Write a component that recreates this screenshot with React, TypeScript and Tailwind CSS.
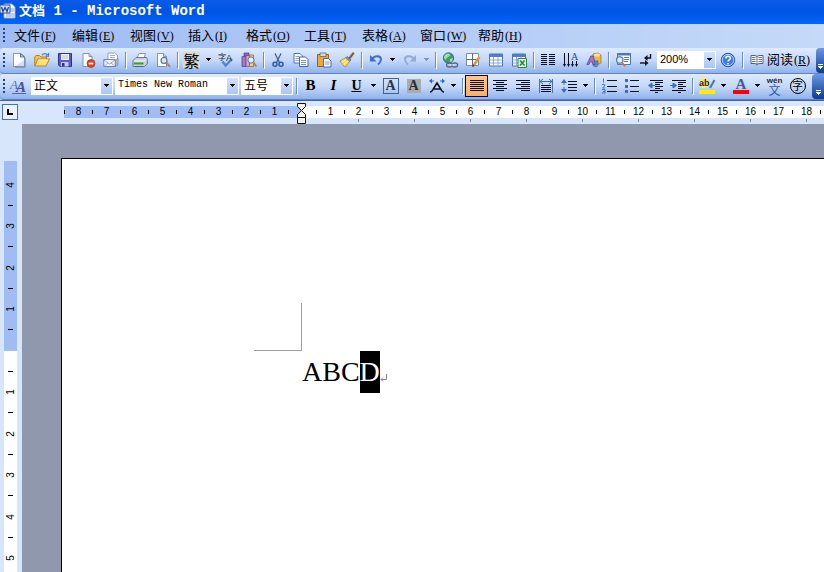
import type { ReactNode } from "react";
import clsx from "clsx";

const MENUS = [
  ["文件", "F"],
  ["编辑", "E"],
  ["视图", "V"],
  ["插入", "I"],
  ["格式", "O"],
  ["工具", "T"],
  ["表格", "A"],
  ["窗口", "W"],
  ["帮助", "H"],
];

const Icon = ({ children }: { children: ReactNode }) => (
  <svg viewBox="0 0 16 16" className="size-4 shrink-0 overflow-visible" fill="none" aria-hidden="true">
    {children}
  </svg>
);

/* horizontal text-line strokes shared by the paragraph icons */
const Lines = ({ d }: { d: string }) => (
  <path d={d} stroke="#0b1020" strokeWidth="1" shapeRendering="crispEdges" />
);

const NewDoc = () => (
  <Icon>
    <path d="M4 2h6.500l4 4v9.500H4z" fill="#6f7b93" />
    <path d="M2.500 1.500h7l4 3.500v9.500h-11z" fill="#fff" stroke="#7485a6" strokeWidth=".8" />
    <path d="M9.500 1.500V5h4z" fill="#b7c8e2" stroke="#465a80" strokeWidth=".8" />
    <path d="M4 14h9V8z" fill="#d4def0" />
  </Icon>
);

const OpenFolder = () => (
  <Icon>
    <path d="M.8 14V5L2 3.500h3.500L6.800 5h5.700v3" fill="#f3c64f" stroke="#a9761a" strokeWidth=".9" />
    <path d="M.8 14l3-7h11.700L12 14z" fill="#ffdf73" stroke="#b07e1c" strokeWidth=".9" />
    <path d="M4.500 8H14" stroke="#fff4b8" />
    <path d="M8 3.200c1.500-2 4-2 5.500 0M14.500 1v3.200h-3" stroke="#4b79c6" strokeWidth="1.200" />
  </Icon>
);

const Save = () => (
  <Icon>
    <path d="M1.500 1.500h13v13H3L1.500 13z" fill="#5a5fc8" stroke="#30318b" />
    <path d="M4 2h8v6H4z" fill="#eef2fc" />
    <path d="M5 4h6M5 6h6" stroke="#a9b2d8" strokeWidth=".8" />
    <path d="M4 10h7.500v4.500H4z" fill="#c8cbea" />
    <path d="M5 11h2.500v3.500H5z" fill="#2f3180" />
  </Icon>
);

const Permission = () => (
  <Icon>
    <path d="M3 1.500h6l3 3v10H3z" fill="#fff" stroke="#6d7f9f" strokeWidth=".8" />
    <path d="M9 1.500v3h3" fill="#bdcce6" stroke="#6d7f9f" strokeWidth=".8" />
    <circle cx="11" cy="11.500" r="4" fill="#e2431f" stroke="#a32a10" strokeWidth=".6" />
    <path d="M8.700 11.500h4.600" stroke="#fff" strokeWidth="1.700" />
  </Icon>
);

const Mail = () => (
  <Icon>
    <path d="M5 1h6.500l3 2.500V9H5z" fill="#fff" stroke="#7c88a6" strokeWidth=".8" />
    <path d="M7 3.500h5M7 5.500h5" stroke="#8d98b4" strokeWidth=".8" />
    <path d="M.8 7.500h11.500v7H.8z" fill="#f2f4fb" stroke="#69779a" strokeWidth=".9" />
    <path d="M1 8l5.500 4L12 8M1 14.500l4-3.700M12 14.500l-4-3.700" stroke="#8792ae" strokeWidth=".8" />
    <path d="M12.500 8L15 6.500V13l-2.500 1.500z" fill="#b3bbd0" stroke="#69779a" strokeWidth=".6" />
  </Icon>
);

const Print = () => (
  <Icon>
    <path d="M5 6l2-4.500h6.500L12 6z" fill="#fff" stroke="#6f7c99" strokeWidth=".8" />
    <path d="M1 8.500l3-3h10.500l.8 2V12l-3 2.500H1z" fill="#c9d1dc" stroke="#5d6b83" strokeWidth=".9" />
    <path d="M2 9h10l2.500-2" stroke="#f6f8fb" />
    <path d="M2 11.500h9.500" stroke="#2fa238" strokeWidth="2" />
    <path d="M3 14.500h8" stroke="#54617a" />
  </Icon>
);

const Preview = () => (
  <Icon>
    <path d="M2.500 1.500h6l3 3v10h-9z" fill="#fff" stroke="#6d7f9f" strokeWidth=".8" />
    <path d="M8.500 1.500v3h3" fill="#bdcce6" stroke="#6d7f9f" strokeWidth=".8" />
    <circle cx="9" cy="8.500" r="3" fill="#cde9f8" stroke="#5c6d8e" strokeWidth="1.100" />
    <path d="M11.300 10.800l3.700 4" stroke="#b98345" strokeWidth="2" />
  </Icon>
);

const Spelling = () => (
  <Icon>
    <path d="M4.500 9.500l3.200 4L14 7" stroke="#5581cc" strokeWidth="2.400" />
    <text x="0" y="8" fontSize="8" fill="#18223e" fontFamily="'Noto Sans CJK SC', sans-serif">
      字
    </text>
    <text x="8" y="9" fontSize="9" fill="#18223e" fontFamily="'Liberation Sans', sans-serif">
      A
    </text>
  </Icon>
);

const Research = () => (
  <Icon>
    <path d="M1 4.500h4v10H1z" fill="#9a7cc8" stroke="#523a86" strokeWidth=".7" />
    <path d="M3 1h5v3H3z" fill="#8b6dbd" stroke="#523a86" strokeWidth=".7" />
    <path d="M5 3.500h3.500v11H5z" fill="#d9a6cf" stroke="#71488c" strokeWidth=".7" />
    <path d="M8.500 3h4v11.500h-4z" fill="#f0d08a" stroke="#8a5f1c" strokeWidth=".7" />
    <circle cx="10" cy="8" r="3.100" fill="#dff1fb" stroke="#64728e" strokeWidth="1" />
    <path d="M12.200 10.300l3.300 4.200" stroke="#b98345" strokeWidth="2" />
  </Icon>
);

const Cut = () => (
  <Icon>
    <path d="M5 1.500l4.500 9M11 1.500l-4.500 9" stroke="#3b5c98" strokeWidth="1.300" />
    <circle cx="5" cy="12.300" r="2" stroke="#2e57a5" strokeWidth="1.500" />
    <circle cx="11" cy="12.300" r="2" stroke="#2e57a5" strokeWidth="1.500" />
  </Icon>
);

const Copy = () => (
  <Icon>
    <path d="M1 1.500h6L9.500 4v7H1z" fill="#fff" stroke="#4f72b5" />
    <path d="M2.500 4.500h4M2.500 6.500h4M2.500 8.500h3" stroke="#7e9fd6" />
    <path d="M6.500 5h6L15 7.500v7H6.500z" fill="#fff" stroke="#4064ab" />
    <path d="M8 8.500h5M8 10.500h5M8 12.500h5" stroke="#6d92d1" />
  </Icon>
);

const Paste = () => (
  <Icon>
    <path d="M1.500 2.500h11v12h-11z" fill="#e8aa3c" stroke="#94621a" />
    <path d="M4 1h6v3.500H4z" fill="#d6d8de" stroke="#606777" strokeWidth=".8" />
    <path d="M7.500 6.500h5L15 9v6H7.500z" fill="#fff" stroke="#4c68a4" />
    <path d="M9 10h4.500M9 12h4.500" stroke="#7898cf" />
  </Icon>
);

const Brush = () => (
  <Icon>
    <path d="M14.800.8L10 6.800" stroke="#8a5f33" strokeWidth="2.200" />
    <path d="M8 4.500L12 8l-1.500 1.500-4-3.500z" fill="#7492ca" stroke="#415f98" strokeWidth=".7" />
    <path d="M6.500 5.800l4 3.800L6 15.300.8 9z" fill="#f7da63" stroke="#ab8328" strokeWidth=".8" />
    <path d="M3 10.500l4-3M4.500 12.500l4-3.500" stroke="#fff5b5" />
  </Icon>
);

const Undo = ({ className }: { className: string }) => (
  <svg viewBox="0 0 16 16" className={clsx("size-4 shrink-0", className)} fill="none" aria-hidden="true">
    <path d="M4 7c3-4 9-3.500 9 .5 0 2-1.300 3.500-3 5" stroke="currentColor" strokeWidth="2" />
    <path d="M2 3v6.500h6.500z" fill="currentColor" />
  </svg>
);

const Hyperlink = () => (
  <Icon>
    <circle cx="6.500" cy="6" r="5.200" fill="#3f9b76" stroke="#256a71" strokeWidth=".8" />
    <path d="M3 3c2-2 5-1.500 5 0S5 5 4 7 2 6 2 5zM8 7l3-1-1 3.500-2 .5z" fill="#a1dcae" />
    <ellipse cx="7.500" cy="13" rx="3" ry="2" stroke="#58698c" strokeWidth="1.300" />
    <ellipse cx="12.700" cy="13" rx="3" ry="2" stroke="#58698c" strokeWidth="1.300" />
    <path d="M8 13h4.500" stroke="#eef3fb" />
  </Icon>
);

const Borders = () => (
  <Icon>
    <path d="M1.500 1.500h12v12h-12z" fill="#fff" stroke="#7e8ba8" />
    <path d="M7.500 1.500v12M1.500 7.500h12" stroke="#5a6785" />
    <path d="M14.500 5l-6 8.500" stroke="#d89a3a" strokeWidth="2.600" />
    <path d="M7.200 15.200l.5-3 2.200 1.600z" fill="#3b332a" />
  </Icon>
);

const Grid = () => (
  <>
    <path d="M1.500 2h13v12h-13z" fill="#fff" stroke="#4872bd" />
    <path d="M1.500 2h13v3h-13z" fill="#4f7dcc" />
    <path d="M1.500 8h13M1.500 11h13M5.500 5v9M10 5v9" stroke="#8aa8db" />
  </>
);

const Excel = () => (
  <Icon>
    <Grid />
    <path d="M7 6.500h8.500v9H7z" fill="#e7f5e3" stroke="#2f8740" />
    <path d="M9 8.500l4.500 5M13.500 8.500l-4.500 5" stroke="#27883a" strokeWidth="1.700" />
  </Icon>
);

const TextDirection = () => (
  <Icon>
    <Lines d="M1.500 1v12M5.500 1v12M9.500 9v4M13.500 9v4" />
    <path d="M0 12h3l-1.500 3zM4 12h3l-1.500 3zM8 12h3l-1.500 3zM12 12h3l-1.500 3z" fill="#0b1020" />
    <text x="8" y="8" fontSize="10" fill="#24509f" fontFamily="'Liberation Serif', serif">
      A
    </text>
  </Icon>
);

const Drawing = () => (
  <Icon>
    <path d="M7 2l5-1 3 2v8l-4 2-4-2z" fill="#eab653" stroke="#9a6d1e" strokeWidth=".7" />
    <ellipse cx="11" cy="3" rx="3" ry="1.500" fill="#ffe39b" />
    <path d="M7 9h5v4.500L10 15l-3-1.500z" fill="#6492d8" stroke="#31589d" strokeWidth=".7" />
    <path d="M.8 12.500l4-8.500h2.500l2 8.500H7L6.500 10H4l-1 2.500z" fill="#9678cc" stroke="#533a8e" strokeWidth=".7" />
  </Icon>
);

const DocMap = () => (
  <Icon>
    <path d="M2.500 1.500h13v11h-13z" fill="#fff" stroke="#4c76bc" />
    <path d="M2.500 2.500h13" stroke="#4c76bc" strokeWidth="2" />
    <path d="M9 5.500h5M9 7.500h5M9 9.500h4" stroke="#6a7896" />
    <circle cx="4.800" cy="8" r="3.200" fill="#d5eef9" stroke="#51698f" strokeWidth="1.100" />
    <path d="M7 10.500l3 4" stroke="#c08437" strokeWidth="2" />
  </Icon>
);

const Marks = () => (
  <Icon>
    <path d="M12.500 2v4H8" stroke="#0b1020" strokeWidth="1.400" />
    <path d="M9.500 3v6L6 6zM7 8l3.500 3L7 14z" fill="#0b1020" />
    <path d="M2 11h6" stroke="#0b1020" strokeWidth="1.400" />
  </Icon>
);

const Help = () => (
  <Icon>
    <circle cx="8" cy="8" r="6.700" fill="#3c7be0" stroke="#2454a8" />
    <circle cx="8" cy="8" r="5.700" stroke="#d3e5ff" strokeWidth=".8" />
    <path d="M5.800 6.500c0-3 4.500-3 4.500-.3 0 1.600-2.200 1.600-2.200 3.300M8 11v1.500" stroke="#fff" strokeWidth="1.500" />
  </Icon>
);

const Book = () => (
  <Icon>
    <path d="M2 3.500h4l2 1 2-1h4v8h-4l-2 1-2-1H2z" fill="#fff" stroke="#50607f" />
    <path d="M8 4.500v9M3 5.500h3.500M3 7.500h3.500M3 9.500h3.500M9.500 5.500H13M9.500 7.500H13M9.500 9.500H13" stroke="#65728f" />
  </Icon>
);

const Styles = () => (
  <Icon>
    <text x="-1" y="11" fontSize="13" fontStyle="italic" fill="#4f74bd" fontFamily="'Liberation Serif', serif">
      A
    </text>
    <text x="5" y="14" fontSize="15" fontStyle="italic" fontWeight="700" fill="#4a4f9e" fontFamily="'Liberation Serif', serif">
      A
    </text>
    <path d="M1 15.500h14" stroke="#5b63b0" />
  </Icon>
);

const CharScale = () => (
  <Icon>
    <path d="M1 14c2 0 2-1 3-2.500L8 5l4 6.500c1 1.500 1 2.500 3 2.500M5 11h6" stroke="#0b1020" strokeWidth="1.500" />
    <path d="M3 .5v5L0 3zM13 .5v5L16 3z" fill="#2b65c4" />
    <path d="M2 3h3M11 3h3" stroke="#2b65c4" />
  </Icon>
);

const Distribute = () => (
  <Icon>
    <path d="M1.500 1v14M14.500 1v14" stroke="#4b6fae" />
    <path d="M2 3.500h12M5 1L2 3.500 5 6M11 1l3 2.500L11 6" stroke="#3a6cc0" />
    <Lines d="M3 7.500h10M3 9.500h10M3 11.500h10M3 13.500h10" />
  </Icon>
);

const LineSpacing = () => (
  <Icon>
    <path d="M3 3v10" stroke="#3a6cc0" strokeDasharray="4 2" />
    <path d="M0 5l3-4 3 4zM0 11l3 4 3-4z" fill="#3a6cc0" />
    <Lines d="M7 3.500h9M7 6.500h9M7 9.500h9M7 12.500h9" />
  </Icon>
);

const Numbered = () => (
  <Icon>
    <path d="M2.500.5v4M1 6.500h2.500V8L1.500 10H4M1 11.500h3V15H1M2 13.500h2" stroke="#3a6cc0" strokeWidth=".9" />
    <Lines d="M6 2.500h10M6 8.500h10M6 13.500h10" />
  </Icon>
);

const Bullets = () => (
  <Icon>
    <path d="M1 1h3v3H1zM1 7h3v3H1zM1 12h3v3H1z" fill="#3a6cc0" />
    <Lines d="M6 2.500h9M6 8.500h9M6 13.500h9" />
  </Icon>
);

const Outdent = () => (
  <Icon>
    <Lines d="M3 2.500h13M8 4.500h8M8 6.500h5M8 8.500h8M8 10.500h5M3 12.500h13M8 14.500h3" />
    <path d="M5 5v5L1.500 7.500zM4 7.500h4" fill="#3a6cc0" stroke="#3a6cc0" />
  </Icon>
);

const Indent = () => (
  <Icon>
    <Lines d="M2 2.500h14M8 4.500h8M8 6.500h5M8 8.500h8M8 10.500h5M2 12.500h14M8 14.500h3" />
    <path d="M3 5v5l3.500-2.500zM0 7.500h4" fill="#3a6cc0" stroke="#3a6cc0" />
  </Icon>
);

const Highlight = () => (
  <Icon>
    <circle cx="5" cy="5" r="5" fill="#fff04a" />
    <text x="0" y="8" fontSize="9" fontWeight="700" fill="#1b2440" fontFamily="'Liberation Sans', sans-serif">
      ab
    </text>
    <path d="M15.500 2L11 10" stroke="#50709f" strokeWidth="2" />
    <path d="M0 12h16v4H0z" fill="#ffee00" />
  </Icon>
);

const FontColor = () => (
  <Icon>
    <text x="2.500" y="11" fontSize="15" fontWeight="700" fill="#3a5c9c" fontFamily="'Liberation Serif', serif">
      A
    </text>
    <path d="M0 12h16v4H0z" fill="#f00" />
  </Icon>
);

const Phonetic = () => (
  <span className="flex flex-col items-center">
    <span className="font-['Liberation_Sans',sans-serif] text-[8px] leading-[7px] font-bold text-[#222a3c]">wén</span>
    <span className="font-['Noto_Sans_CJK_SC',sans-serif] text-[12px] leading-[11px] text-[#2f58b0]">文</span>
  </span>
);

const Enclosed = () => (
  <span className="grid size-4 place-items-center rounded-full border border-black text-[11px] leading-none">
    字
  </span>
);

interface ToolProps {
  label: string;
  active?: boolean;
  disabled?: boolean;
  children: ReactNode;
}

const Tool = ({ label, active, disabled, children }: ToolProps) => (
  <button
    type="button"
    aria-label={label}
    disabled={disabled}
    className={clsx(
      "flex h-[22px] w-[23px] shrink-0 items-center justify-center",
      active && "border border-[#000080] bg-linear-to-b from-[#ffc684] to-[#fdb05e]",
    )}
  >
    {children}
  </button>
);

const Arrow = () => (
  <svg viewBox="0 0 5 3" className="h-[3px] w-[5px]" fill="currentColor" shapeRendering="crispEdges" aria-hidden="true">
    <path d="M0 0h5L2.500 3z" />
  </svg>
);

const Caret = ({ label, disabled }: { label: string; disabled?: boolean }) => (
  <button
    type="button"
    aria-label={label}
    disabled={disabled}
    className="flex h-[22px] w-[11px] shrink-0 items-center justify-center disabled:text-[#7d93bd]"
  >
    <Arrow />
  </button>
);

const Separator = () => (
  <span className="flex w-[6px] shrink-0 justify-center">
    <i className="h-4 w-px bg-[#6a8ccb] shadow-[1px_1px_0_#fff]" />
  </span>
);

const Grip = () => (
  <span className="flex w-[7px] shrink-0 flex-col items-center gap-[2px]">
    {[0, 1, 2, 3].map((n) => (
      <i key={n} className="size-[2px] bg-[#27417f]" />
    ))}
  </span>
);

const Combo = ({ label, value, className }: { label: string; value: string; className: string }) => (
  <span className={clsx("relative h-[18px] shrink-0 bg-white", className)}>
    <select
      aria-label={label}
      className="block h-4 w-full appearance-none bg-transparent pl-[3px] leading-4 outline-none"
    >
      <option>{value}</option>
    </select>
    <span className="pointer-events-none absolute inset-y-px right-px flex w-[11px] items-center justify-center bg-linear-to-b from-[#d3e2fa] to-[#aac6f4]">
      <Arrow />
    </span>
  </span>
);

const Toolbar = ({ label, children }: { label: string; children: ReactNode }) => (
  <div
    role="toolbar"
    aria-label={label}
    className="flex h-[26px] items-center rounded-l-sm border-b border-[#5d84c6] bg-linear-to-b from-[#dfeafd] via-[#c4d8f8] to-[#8fb2ec] pb-[2px]"
  >
    {children}
  </div>
);

const Options = ({ className }: { className: string }) => (
  <button
    type="button"
    aria-label="工具栏选项"
    className={clsx(
      "-mb-[2px] ml-auto flex h-[25px] shrink-0 flex-col items-center justify-end gap-px rounded-l-sm bg-linear-to-b from-[#6c98e2] to-[#0c3a93] pb-1 text-white",
      className,
    )}
  >
    <i className="h-px w-[5px] bg-white" />
    <Arrow />
  </button>
);

const MenuKey = ({ letter }: { letter: string }) => (
  <span className="pl-px font-['Liberation_Serif',serif] text-[12px]">
    (<u>{letter}</u>)
  </span>
);

const StandardBar = () => (
  <Toolbar label="常用">
    <Grip />
    <Tool label="新建"><NewDoc /></Tool>
    <Tool label="打开"><OpenFolder /></Tool>
    <Tool label="保存"><Save /></Tool>
    <Tool label="权限"><Permission /></Tool>
    <Tool label="电子邮件"><Mail /></Tool>
    <Separator />
    <Tool label="打印"><Print /></Tool>
    <Tool label="打印预览"><Preview /></Tool>
    <Separator />
    <Tool label="繁体">
      <span className="bg-[#dcd9cf] text-[16px] leading-4">繁</span>
    </Tool>
    <Caret label="繁体选项" />
    <Tool label="拼写和语法"><Spelling /></Tool>
    <Tool label="信息检索"><Research /></Tool>
    <Separator />
    <Tool label="剪切"><Cut /></Tool>
    <Tool label="复制"><Copy /></Tool>
    <Tool label="粘贴"><Paste /></Tool>
    <Tool label="格式刷"><Brush /></Tool>
    <Separator />
    <Tool label="撤消"><Undo className="text-[#3d6fd0]" /></Tool>
    <Caret label="撤消选项" />
    <Tool label="恢复" disabled><Undo className="-scale-x-100 text-[#93abd6]" /></Tool>
    <Caret label="恢复选项" disabled />
    <Separator />
    <Tool label="超链接"><Hyperlink /></Tool>
    <Tool label="表格和边框"><Borders /></Tool>
    <Tool label="插入表格"><Icon><Grid /></Icon></Tool>
    <Tool label="插入 Excel 工作表"><Excel /></Tool>
    <Separator />
    <Tool label="分栏">
      <Icon>
        <Lines d="M1 2.500h6M9 2.500h6M1 4.500h6M9 4.500h6M1 6.500h6M9 6.500h6M1 8.500h6M9 8.500h6M1 10.500h6M9 10.500h6M1 12.500h6M9 12.500h6" />
      </Icon>
    </Tool>
    <Tool label="文字方向"><TextDirection /></Tool>
    <Tool label="绘图"><Drawing /></Tool>
    <Separator />
    <Tool label="文档结构图"><DocMap /></Tool>
    <Tool label="显示编辑标记"><Marks /></Tool>
    <Combo label="显示比例" value="200%" className="w-[59px] font-['Liberation_Sans',sans-serif] text-[11px]" />
    <Tool label="帮助"><Help /></Tool>
    <Separator />
    <button type="button" className="flex shrink-0 items-center gap-[2px] pl-1 text-[13px] leading-4 whitespace-nowrap">
      <Book />
      <span>
        阅读<MenuKey letter="R" />
      </span>
    </button>
    <Options className="w-2" />
  </Toolbar>
);

const FormattingBar = () => (
  <Toolbar label="格式">
    <Grip />
    <Tool label="格式窗格"><Styles /></Tool>
    <div className="flex shrink-0 gap-[2px] pl-px">
      <Combo label="样式" value="正文" className="w-[82px] text-[12px]" />
      <Combo label="字体" value="Times New Roman" className="w-[124px] font-['Liberation_Mono',monospace] text-[10px]" />
      <Combo label="字号" value="五号" className="w-[52px] text-[12px]" />
    </div>
    <Separator />
    <Tool label="加粗"><b className="font-['Liberation_Serif',serif] text-[15px]">B</b></Tool>
    <Tool label="倾斜"><b className="font-['Liberation_Serif',serif] text-[15px] italic">I</b></Tool>
    <Tool label="下划线"><b className="font-['Liberation_Serif',serif] text-[14px] underline">U</b></Tool>
    <Caret label="下划线选项" />
    <Tool label="字符边框">
      <b className="grid size-4 place-items-center border border-[#3f6199] font-['Liberation_Serif',serif] text-[14px] leading-none text-[#2a3550]">A</b>
    </Tool>
    <Tool label="字符底纹">
      <b className="grid size-[14px] place-items-center bg-[#a9abad] font-['Liberation_Serif',serif] text-[14px] leading-none text-[#2a2f3a]">A</b>
    </Tool>
    <Tool label="字符缩放"><CharScale /></Tool>
    <Caret label="字符缩放选项" />
    <Separator />
    <Tool label="两端对齐" active>
      <Icon><Lines d="M1 2.500h14M1 4.500h14M1 6.500h14M1 8.500h14M1 10.500h14M1 12.500h14" /></Icon>
    </Tool>
    <Tool label="居中">
      <Icon><Lines d="M1 2.500h14M4 4.500h8M1 6.500h14M4 8.500h8M1 10.500h14M4 12.500h8" /></Icon>
    </Tool>
    <Tool label="右对齐">
      <Icon><Lines d="M1 2.500h14M6 4.500h9M1 6.500h14M6 8.500h9M1 10.500h14M6 12.500h9" /></Icon>
    </Tool>
    <Tool label="分散对齐"><Distribute /></Tool>
    <Tool label="行距"><LineSpacing /></Tool>
    <Caret label="行距选项" />
    <Separator />
    <Tool label="编号"><Numbered /></Tool>
    <Tool label="项目符号"><Bullets /></Tool>
    <Tool label="减少缩进量"><Outdent /></Tool>
    <Tool label="增加缩进量"><Indent /></Tool>
    <Separator />
    <Tool label="突出显示"><Highlight /></Tool>
    <Caret label="突出显示选项" />
    <Tool label="字体颜色"><FontColor /></Tool>
    <Caret label="字体颜色选项" />
    <Tool label="拼音指南"><Phonetic /></Tool>
    <Tool label="带圈字符"><Enclosed /></Tool>
    <Options className="w-3" />
  </Toolbar>
);

const HorizontalRuler = () => (
  <div className="flex h-6 shrink-0 overflow-hidden border-t border-[#4c5f86] bg-[#d8e6fb]">
    <div className="w-16 shrink-0 pt-[3px] pl-[2px]">
      <button type="button" aria-label="左对齐制表符" className="grid size-4 place-items-center border border-[#4a6fb5] bg-[#eaf2fe]">
        <i className="size-[6px] border-b-2 border-l-2 border-black" />
      </button>
    </div>
    <div className="flex min-w-0 flex-1 pt-[5px] font-['Liberation_Sans',sans-serif] text-[10px] leading-3">
      {[8, 7, 6, 5, 4, 3, 2, 1].map((n) => (
        <span key={n} className="flex h-3 w-7 shrink-0 items-center bg-[#a0bdf3]">
          <i className="h-1 w-px bg-black" />
          <span className="flex-1 text-center">{n}</span>
        </span>
      ))}
      <span className="relative flex h-3 w-7 shrink-0 items-center bg-linear-to-r from-[#a0bdf3] from-50% to-white to-50%">
        <i className="h-1 w-px bg-black" />
        <svg viewBox="0 0 10 22" className="absolute -top-[3px] left-2 h-[22px] w-[10px]" fill="#f4f2e6" stroke="#111" aria-hidden="true">
          <path d="M1.500.500h8v3l-4 4-4-4zM5.500 7.500l4 4v3h-8v-3zM1.500 14.500h8v6h-8z" />
        </svg>
      </span>
      {Array.from({ length: 18 }, (_, i) => i + 1).map((n) => (
        <span key={n} className="flex w-7 shrink-0 flex-col">
          <span className="flex h-3 items-center bg-white">
            <i className="h-1 w-px bg-black" />
            <span className="flex-1 text-center">{n}</span>
          </span>
          {n % 2 === 0 && <i className="mx-auto mt-px h-[3px] w-px bg-[#7d8aa5]" />}
        </span>
      ))}
      <span className="flex h-3 flex-1 items-center bg-white">
        <i className="h-1 w-px bg-black" />
      </span>
    </div>
  </div>
);

const VerticalRuler = () => (
  <div className="w-[22px] shrink-0 overflow-hidden bg-[#d8e6fb] pt-[37px] pl-1">
    <div className="w-[13px] bg-linear-to-b from-[#a0bdf3] from-[190px] to-white to-[190px] pt-[3px] font-['Liberation_Sans',sans-serif] text-[10px] leading-3">
      <div className="flex h-[415px] flex-col">
        {["4", "3", "2", "1", "", "1", "2", "3", "4", "5"].map((mark, i) => (
          <span key={i} className="relative flex flex-1 items-center justify-center">
            <span className="-rotate-90">{mark}</span>
            <i className="absolute bottom-0 h-px w-[5px] bg-black" />
          </span>
        ))}
      </div>
    </div>
  </div>
);

const Document = () => (
  <main className="flex flex-1 bg-[#9098ae] pt-[34px] pl-[39px]">
    <div className="flex-1 border-t border-l border-black bg-white pt-36 pl-48">
      <div className="size-12 border-r border-b border-[#a0a0a0]" />
      <p className="flex items-center pl-12 font-['Liberation_Serif',serif] text-[28px] leading-[42px]">
        ABC
        <mark className="bg-black text-white">D</mark>
        <svg viewBox="0 0 8 9" className="mt-3 h-[9px] w-2" fill="none" stroke="#888" aria-hidden="true">
          <path d="M6.500 0v5.500H1M3 3.500l-2 2 2 2" />
        </svg>
      </p>
    </div>
  </main>
);

export default function App() {
  return (
    <div className="flex h-screen flex-col overflow-hidden bg-[#d8e6fb] font-['Noto_Sans_CJK_SC',sans-serif] text-black">
      <header className="flex h-6 shrink-0 items-center gap-[3px] bg-linear-to-b from-[#0a5be8] via-[#0054e3] to-[#0366fb] pb-[3px] text-white">
        <svg viewBox="0 0 16 16" className="size-4" fill="none" aria-hidden="true">
          <path d="M4 1h8l3 3v11H4z" fill="#fff" stroke="#8fa9d8" />
          <path d="M10 6h4M10 8h4M6 11h8M6 13h8" stroke="#7f9bd0" />
          <path d="M0 2h10v8H0z" fill="#dce8fb" stroke="#2b559f" />
          <path d="M1.500 4L3 8.500l2-4 2 4L8.500 4" stroke="#1d4594" strokeWidth="1.300" />
        </svg>
        <h1 className="text-[13px] font-bold whitespace-pre">
          文档<span className="font-['Liberation_Mono',monospace] text-[14px]"> 1 - Microsoft Word</span>
        </h1>
      </header>
      <nav className="flex h-6 shrink-0 items-center bg-linear-to-r from-[#9ebcf3] to-[#c5daf9] pb-[3px] text-[13px]">
        <Grip />
        {MENUS.map(([name, letter]) => (
          <button key={letter} type="button" className="w-[58px] shrink-0 pl-[7px] text-left whitespace-nowrap">
            {name}
            <MenuKey letter={letter} />
          </button>
        ))}
      </nav>
      <div className="shrink-0 overflow-hidden bg-[#b4cdf7]">
        <StandardBar />
        <FormattingBar />
      </div>
      <HorizontalRuler />
      <div className="flex min-h-0 flex-1">
        <VerticalRuler />
        <Document />
      </div>
    </div>
  );
}
